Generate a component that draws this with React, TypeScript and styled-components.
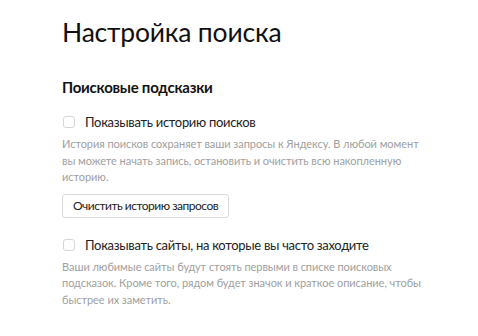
import styled, { createGlobalStyle } from 'styled-components'

const GlobalStyle = createGlobalStyle`
  body {
    margin: 0;
    background: #fff;
    font-family: Lato, 'Noto Sans', sans-serif;
    color: #000;
  }
`

const Page = styled.div`
  padding: 16px 0 0 62px;
  width: 362px;
`

const Title = styled.h1`
  margin: 0;
  font-size: 26.5px;
  line-height: 32px;
  font-weight: 400;
  letter-spacing: -0.2px;
  color: #111;
`

const Section = styled.section`
  margin-top: 29px;
  display: flex;
  flex-direction: column;
`

const SectionTitle = styled.h2`
  margin: 0 0 15px;
  font-size: 15px;
  line-height: 20px;
  font-weight: 700;
  letter-spacing: -0.25px;
  color: #111;
`

const Option = styled.label`
  display: flex;
  align-items: center;
  gap: 10px;
  font-size: 13px;
  line-height: 20px;
  letter-spacing: -0.3px;
  color: #222;
  cursor: pointer;
`

const Box = styled.span`
  width: 10px;
  height: 10px;
  border: 1px solid #d6d6d6;
  border-radius: 3px;
  background: #fff;
  margin-left: 1px;
`

const Hint = styled.p<{ $last?: boolean }>`
  margin: 4px 0 ${p => (p.$last ? 0 : '8px')};
  font-size: 11px;
  line-height: 16.5px;
  letter-spacing: -0.05px;
  color: #a0a0a0;
`

const Button = styled.button`
  align-self: flex-start;
  height: 24px;
  padding: 0 10px;
  margin-bottom: 17px;
  background: #fff;
  border: 1px solid #d9d9d9;
  border-radius: 3px;
  font-family: inherit;
  font-size: 12px;
  letter-spacing: -0.5px;
  color: #222;
  cursor: pointer;
`

function App() {
  return (
    <>
      <GlobalStyle />
      <Page>
        <Title>Настройка поиска</Title>
        <Section>
          <SectionTitle>Поисковые подсказки</SectionTitle>
          <Option>
            <Box />
            Показывать историю поисков
          </Option>
          <Hint>
            История поисков сохраняет ваши запросы к Яндексу. В любой момент вы можете начать
            запись, остановить и очистить всю накопленную историю.
          </Hint>
          <Button>Очистить историю запросов</Button>
          <Option>
            <Box />
            Показывать сайты, на которые вы часто заходите
          </Option>
          <Hint $last>
            Ваши любимые сайты будут стоять первыми в списке поисковых подсказок. Кроме того,
            рядом будет значок и краткое описание, чтобы быстрее их заметить.
          </Hint>
        </Section>
      </Page>
    </>
  )
}

export default App
